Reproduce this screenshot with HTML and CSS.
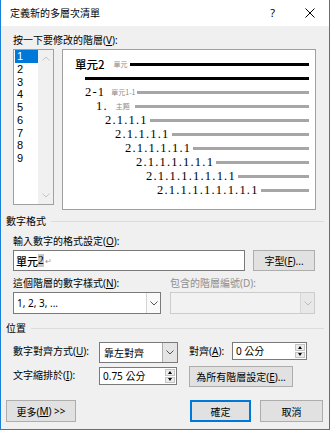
FILE: index.html
```html
<!DOCTYPE html>
<html lang="zh-Hant">
<head>
<meta charset="utf-8">
<link rel="stylesheet" href="styles.css">
</head>
<body>
<div class="win">
  <div class="titlebar">
    <span class="title">定義新的多層次清單</span>
    <span class="help">?</span>
    <svg class="close" width="10" height="10" viewBox="0 0 10 10"><path d="M0.5 0.5 L9.5 9.5 M9.5 0.5 L0.5 9.5" stroke="#000" stroke-width="1" fill="none"/></svg>
  </div>

  <div class="lbl l1">按一下要修改的階層(<u>V</u>):</div>
  <div class="top">
    <div class="levels">
      <ul class="items">
        <li class="sel">1</li><li>2</li><li>3</li><li>4</li><li>5</li><li>6</li><li>7</li><li>8</li><li>9</li>
      </ul>
      <div class="vscroll">
        <svg width="8" height="5" viewBox="0 0 8 5"><path d="M0.5 4.5 L4 1 L7.5 4.5" fill="none" stroke="#c4c4c4"/></svg>
        <svg width="8" height="5" viewBox="0 0 8 5"><path d="M0.5 0.5 L4 4 L7.5 0.5" fill="none" stroke="#c4c4c4"/></svg>
      </div>
    </div>
    <div class="preview">
      <div class="row r1"><span class="big">單元2</span><span class="sm s1">單元</span><i class="ln k"></i></div>
      <div class="row r2"><i class="ln k"></i></div>
      <div class="row r3"><span class="num">2-1</span><span class="sm s3">單元1-1</span><i class="ln"></i></div>
      <div class="row r4"><span class="num">1.</span><span class="sm s4">主題</span><i class="ln"></i></div>
      <div class="row r5"><span class="num">2.1.1.1</span><i class="ln"></i></div>
      <div class="row r6"><span class="num">2.1.1.1.1</span><i class="ln"></i></div>
      <div class="row r7"><span class="num">2.1.1.1.1.1</span><i class="ln"></i></div>
      <div class="row r8"><span class="num">2.1.1.1.1.1.1</span><i class="ln"></i></div>
      <div class="row r9"><span class="num">2.1.1.1.1.1.1.1</span><i class="ln"></i></div>
      <div class="row r10"><span class="num">2.1.1.1.1.1.1.1.1</span><i class="ln"></i></div>
    </div>
  </div>

  <div class="grp g1"><span>數字格式</span><i class="rule"></i></div>
  <div class="lbl l2">輸入數字的格式設定(<u>O</u>):</div>
  <div class="frow">
    <div class="input"><span>單元</span><span class="hl">2</span><span class="ret">↵</span></div>
    <div class="btn fontbtn">字型(<u>F</u>)...</div>
  </div>
  <div class="lrow">
    <span class="lbl la">這個階層的數字樣式(<u>N</u>):</span>
    <span class="lbl dis">包含的階層編號(D):</span>
  </div>
  <div class="frow crow">
    <div class="combo c1"><span class="val">1, 2, 3, ...</span><span class="arr"><svg width="8" height="5" viewBox="0 0 8 5"><path d="M0.5 0.5 L4 4 L7.5 0.5" fill="none" stroke="#555"/></svg></span></div>
    <div class="combo c2 off"><span class="val"></span><span class="arr"><svg width="8" height="5" viewBox="0 0 8 5"><path d="M0.5 0.5 L4 4 L7.5 0.5" fill="none" stroke="#bdbdbd"/></svg></span></div>
  </div>

  <div class="grp g2"><span>位置</span><i class="rule"></i></div>
  <div class="prow p1">
    <span class="plbl w86">數字對齊方式(<u>U</u>):</span>
    <div class="combo c3"><span class="val">靠左對齊</span><span class="arr gb"><svg width="8" height="5" viewBox="0 0 8 5"><path d="M0.5 0.5 L4 4 L7.5 0.5" fill="none" stroke="#555"/></svg></span></div>
    <span class="plbl w43 ml11">對齊(<u>A</u>):</span>
    <div class="spin s75"><span class="val">0 公分</span><span class="spb"><i class="up"></i><i class="dn"></i></span></div>
  </div>
  <div class="prow p2">
    <span class="plbl w86 t2">文字縮排於(<u>I</u>):</span>
    <div class="spin s78"><span class="val">0.75 公分</span><span class="spb"><i class="up"></i><i class="dn"></i></span></div>
    <div class="btn allbtn">為所有階層設定(<u>E</u>)...</div>
  </div>

  <div class="brow">
    <div class="btn more">更多(<u>M</u>) &gt;&gt;</div>
    <div class="btn ok">確定</div>
    <div class="btn cancel">取消</div>
  </div>
</div>
</body>
</html>
```

FILE: styles.css
```css
* { box-sizing: border-box; }
html, body { margin: 0; padding: 0; }
body {
  width: 330px;
  height: 430px;
  background: #fff;
  font-family: "Noto Sans", "Noto Sans CJK TC", sans-serif;
  font-size: 10px;
  color: #000;
}
u { text-decoration: underline; text-underline-offset: 1px; }
.win {
  width: 330px;
  height: 430px;
  background: #f0f0f0;
  border: 1px solid #1a80d8;
  border-top: none;
  display: flex;
  flex-direction: column;
}
.titlebar {
  flex: none;
  height: 26px;
  background: #fff;
  display: flex;
  align-items: center;
}
.title {
  margin-left: 9px;
  font-family: "Noto Sans CJK TC", sans-serif;
  font-size: 10px;
  line-height: 14px;
}
.help {
  margin-left: auto;
  margin-right: 30px;
  font-family: "Noto Sans", sans-serif;
  font-size: 11px;
  line-height: 14px;
}
.close { margin-right: 14px; }

.lbl { line-height: 14px; white-space: nowrap; }
.l1 { margin: 7px 0 0 12px; }
.top { display: flex; align-items: flex-start; margin-top: 2px; }
.levels {
  margin-left: 12px;
  width: 41px;
  height: 156px;
  border: 1px solid #a0a0a0;
  background: #fff;
  display: flex;
}
.items {
  list-style: none;
  margin: 0;
  padding: 0 0 0 1px;
  width: 24px;
  font-family: "Liberation Sans", sans-serif;
  font-size: 11px;
  line-height: 12.75px;
}
.items li { padding-left: 2px; height: 12.75px; overflow: hidden; }
.items .sel { background: #0078d7; color: #fff; }
.vscroll {
  flex: 1;
  background: #f0f0f0;
  display: flex;
  flex-direction: column;
  justify-content: space-between;
  align-items: center;
  padding: 6px 0 6px;
}
.preview {
  margin-left: 8px;
  width: 254px;
  height: 161px;
  border: 1px solid #a0a0a0;
  background: #fff;
  padding: 7px 6px 0 0;
}
.row { display: flex; align-items: center; height: 14px; }
.big { font-family: "Noto Sans CJK TC", sans-serif; font-size: 11.5px; line-height: 14px; font-weight: 500; }
.num { font-family: "Liberation Serif", serif; font-size: 12.5px; line-height: 14px; letter-spacing: 1.2px; }
.sm { font-family: "Noto Sans CJK TC", sans-serif; font-size: 7px; line-height: 14px; color: #8a8a8a; }
.ln { flex: 1; height: 3px; background: #a6a6a6; margin-left: 2px; }
.ln.k { background: #000; }
.r1 { padding-left: 12px; }
.s1 { margin-left: 9px; }
.r2 { padding-left: 22px; }
.r2 .ln { margin-left: 0; }
.r3 { padding-left: 22px; }
.s3 { margin-left: 6px; }
.r4 { padding-left: 33px; }
.s4 { margin-left: 8px; }
.r4 .ln { margin-left: 5px; }
.r5 { padding-left: 42px; }
.r6 { padding-left: 52px; }
.r7 { padding-left: 62px; }
.r8 { padding-left: 73px; }
.r9 { padding-left: 83px; }
.r10 { padding-left: 94px; }

.grp { display: flex; align-items: center; line-height: 14px; margin: 0 5px 0 5px; }
.grp .rule { flex: 1; height: 1px; background: #dcdcdc; margin-left: 5px; }
.g1 { margin-top: 4px; }
.l2 { margin: 6px 0 0 12px; }
.frow { display: flex; margin: 2px 0 0 12px; }
.input {
  width: 232px;
  height: 21px;
  border: 1px solid #7a7a7a;
  background: #fff;
  display: flex;
  align-items: center;
  padding-left: 2px;
  font-family: "Noto Sans CJK TC", sans-serif;
  font-size: 11px;
  font-weight: 500;
}
.hl { background: #c8c8c8; font-family: "Liberation Serif", serif; font-size: 11.5px; line-height: 13px; }
.ret { color: #9a9a9a; font-size: 8px; margin-left: 1px; }
.btn {
  height: 21px;
  border: 1px solid #adadad;
  background: #e1e1e1;
  display: flex;
  align-items: center;
  justify-content: center;
  white-space: nowrap;
}
.fontbtn { width: 62px; margin-left: 8px; }
.lrow { display: flex; margin: 5px 0 0 12px; }
.la { width: 157px; }
.dis { color: #8f8f8f; }
.crow { margin-top: 2px; }
.combo {
  height: 22px;
  border: 1px solid #7a7a7a;
  background: #fff;
  display: flex;
}
.combo .val { flex: 1; padding-left: 3px; display: flex; align-items: center; white-space: nowrap; }
.combo .arr { width: 14px; border-left: 1px solid #d4d4d4; display: flex; align-items: center; justify-content: center; background: #fafafa; }
.c1 { width: 148px; }
.c2 { width: 145px; margin-left: 9px; }
.off { border-color: #cccccc; background: #f2f2f2; }
.off .arr { background: #e8e8e8; border-left-color: #d6d6d6; }

.g2 { margin-top: 7px; }
.prow { display: flex; align-items: flex-start; margin-left: 12px; }
.p1 { margin-top: 7px; }
.p2 { margin-top: 3px; }
.plbl { line-height: 16px; margin-top: 1px; white-space: nowrap; }
.w86 { width: 86px; }
.w43 { width: 43px; }
.ml11 { margin-left: 11px; }
.c3 { width: 79px; height: 21px; }
.c3 .val { padding-left: 4px; }
.arr.gb { width: 15px; background: #e5e5e5; border-left: 1px solid #adadad; }
.spin {
  height: 18px;
  border: 1px solid #7a7a7a;
  background: #fff;
  display: flex;
}
.spin .val { flex: 1; padding-left: 3px; line-height: 16px; white-space: nowrap; }
.spb { width: 11px; display: flex; flex-direction: column; padding: 1px 1px 1px 0; gap: 1px; }
.spb i {
  flex: 1;
  background: #ececec;
  border: 1px solid #c4c4c4;
  display: flex;
  align-items: center;
  justify-content: center;
}
.spb i::after { content: ""; width: 0; height: 0; border-left: 2.5px solid transparent; border-right: 2.5px solid transparent; }
.spb .up::after { border-bottom: 3px solid #000; }
.spb .dn::after { border-top: 3px solid #000; }
.s75 { width: 75px; }
.s78 { width: 78px; margin-top: 1px; }
.p2 .plbl { margin-top: 1px; }
.allbtn { width: 104px; margin-left: 12px; }

.brow { display: flex; margin: auto 0 7px 5px; }
.brow .btn { height: 22px; }
.more { width: 70px; }
.ok { width: 61px; margin-left: 114px; border: 1px solid #0078d7; box-shadow: inset 0 0 0 1px #0078d7; }
.cancel { width: 63px; margin-left: 9px; }
```
